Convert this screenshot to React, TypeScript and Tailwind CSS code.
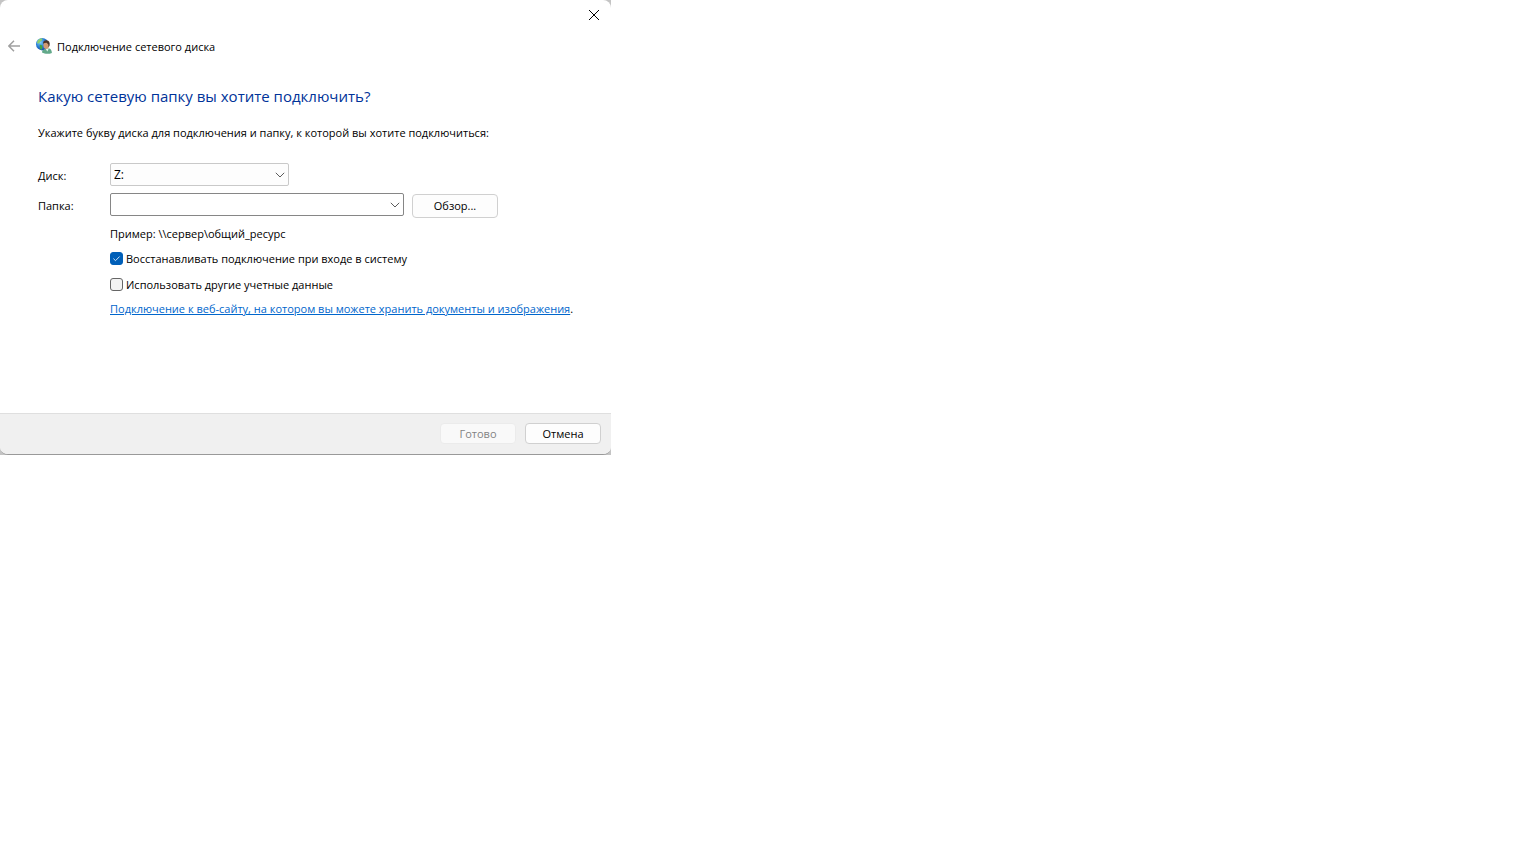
import { useState } from "react";

function GlobeUserIcon() {
  return (
    <svg width="16" height="16" viewBox="0 0 16 16" aria-hidden="true">
      <defs>
        <radialGradient id="globe" cx="0.35" cy="0.35" r="0.75">
          <stop offset="0" stopColor="#7fd0f5" />
          <stop offset="0.5" stopColor="#2a7fd8" />
          <stop offset="1" stopColor="#123f9c" />
        </radialGradient>
      </defs>
      <circle cx="6.2" cy="6.2" r="6.2" fill="url(#globe)" />
      <path d="M2.4 1.8C3.6.7 5.4.3 6.6.6L5.8 2.4 4.4 3.6 3 5.6 1 5.2C1.2 3.8 1.6 2.6 2.4 1.8Z" fill="#8fd06a" />
      <path d="M3.6 6.6 6.4 7.4 6.4 9.6 5.6 12 4 10.4Z" fill="#3fa544" />
      <path d="M6 14.6C6 12.6 7 11.3 9.4 10.9L12.6 10.3C14.8 10.9 15.8 12.4 15.9 15 13 16.2 9 16.2 6 14.6Z" fill="#62a98a" />
      <path d="M9.4 10.4 11.4 13.4 12.8 10.2Z" fill="#e6f3ee" />
      <ellipse cx="10.2" cy="7.2" rx="2.8" ry="3.8" fill="#d19a72" />
      <path d="M7 5.8C7 3.2 8.4 2.1 10.6 2.2 13 2.4 14.2 4.4 13.6 7.4L12.6 9.6 12.4 6.4 10.6 4.8 8.6 5Z" fill="#4a3428" />
    </svg>
  );
}

function Chevron() {
  return (
    <svg width="10" height="6" viewBox="0 0 10 6" fill="none" stroke="#5c5c5c" aria-hidden="true">
      <path d="M0.8 0.8 5 5 9.2 0.8" />
    </svg>
  );
}

interface CheckProps {
  id: string;
  label: string;
  checked: boolean;
  onChange: (value: boolean) => void;
}

function Check({ id, label, checked, onChange }: CheckProps) {
  return (
    <div className="flex items-start gap-[3px]">
      <span className="mt-px grid size-[13px]">
        <input
          id={id}
          type="checkbox"
          checked={checked}
          onChange={(e) => onChange(e.target.checked)}
          className="col-start-1 row-start-1 size-[13px] appearance-none rounded-[3px] border border-[#666666] bg-[#f3f3f3] checked:border-[#005fb8] checked:bg-[#005fb8]"
        />
        {checked && (
          <svg
            viewBox="0 0 13 13"
            fill="none"
            stroke="#cfe3f6"
            className="pointer-events-none col-start-1 row-start-1 size-[13px]"
            aria-hidden="true"
          >
            <path d="M3.4 6.6 5.5 8.7 9.6 4.5" />
          </svg>
        )}
      </span>
      <label htmlFor={id}>{label}</label>
    </div>
  );
}

export default function App() {
  const [drive, setDrive] = useState("Z:");
  const [folder, setFolder] = useState("");
  const [reconnect, setReconnect] = useState(true);
  const [otherCredentials, setOtherCredentials] = useState(false);

  return (
    <div className="min-h-screen bg-white font-['Open_Sans','Noto_Sans',sans-serif] text-[11px] leading-4 text-black">
      <div className="max-w-[611px] bg-[#c4c4c4]">
        <main className="overflow-hidden rounded-lg border-b border-[#999999] bg-white">
          <div className="flex h-[30px] justify-end">
            <button aria-label="Закрыть" className="flex w-[34px] items-center justify-center">
              <svg width="10" height="10" viewBox="0 0 10 10" stroke="#000000" aria-hidden="true">
                <path d="M0 0 10 10M10 0 0 10" />
              </svg>
            </button>
          </div>

          <header className="flex h-8 items-center pl-2">
            <button aria-label="Назад" disabled className="mr-4">
              <svg width="12" height="12" viewBox="0 0 12 12" fill="none" stroke="#a0a0a0" strokeWidth="1.5" aria-hidden="true">
                <path d="M12 6H0.8M6 0.8 0.8 6 6 11.2" />
              </svg>
            </button>
            <GlobeUserIcon />
            <span className="ml-[5px] pt-px">Подключение сетевого диска</span>
          </header>

          <section className="px-[38px] pt-[23px]">
            <h1 className="text-[15px] leading-[22px] text-[#003399]">
              Какую сетевую папку вы хотите подключить?
            </h1>
            <p className="mt-[18px]">
              Укажите букву диска для подключения и папку, к которой вы хотите подключиться:
            </p>
          </section>

          <section className="grid grid-cols-[72px_1fr] pt-[22px] pr-[22px] pl-[38px]">
            <label htmlFor="drive" className="pt-[5px]">Диск:</label>
            <div className="relative h-[23px] w-[179px]">
              <select
                id="drive"
                value={drive}
                onChange={(e) => setDrive(e.target.value)}
                className="h-full w-full appearance-none rounded-xs border border-[#c9c9c9] bg-[#fdfdfd] px-[3px] text-[12px]"
              >
                <option>Z:</option>
                <option>Y:</option>
                <option>X:</option>
              </select>
              <span className="pointer-events-none absolute inset-y-0 right-1 flex items-center">
                <Chevron />
              </span>
            </div>

            <label htmlFor="folder" className="pt-3">Папка:</label>
            <div className="flex gap-2 pt-[7px]">
              <div className="flex h-[23px] w-[294px] rounded-xs border border-[#868686] bg-white">
                <input
                  id="folder"
                  value={folder}
                  onChange={(e) => setFolder(e.target.value)}
                  className="min-w-0 flex-1 px-[3px] text-[12px] outline-none"
                />
                <button aria-label="Показать список папок" className="flex items-center px-[3px]">
                  <Chevron />
                </button>
              </div>
              <button className="mt-px h-6 w-[86px] rounded-sm border border-[#d0d0d0] bg-[#fdfdfd]">
                Обзор...
              </button>
            </div>

            <div className="col-start-2 pt-2">
              <p>Пример: \\сервер\общий_ресурс</p>
              <div className="mt-[9px] flex flex-col gap-[10px]">
                <Check
                  id="reconnect"
                  label="Восстанавливать подключение при входе в систему"
                  checked={reconnect}
                  onChange={setReconnect}
                />
                <Check
                  id="credentials"
                  label="Использовать другие учетные данные"
                  checked={otherCredentials}
                  onChange={setOtherCredentials}
                />
              </div>
              <p className="mt-2">
                <a href="#" className="text-[#0066cc] underline">
                  Подключение к веб-сайту, на котором вы можете хранить документы и изображения
                </a>
                .
              </p>
            </div>
          </section>

          <footer className="mt-24 flex justify-end gap-[9px] border-t border-[#dfdfdf] bg-[#f0f0f0] pt-[9px] pr-[10px] pb-[10px]">
            <button disabled className="h-[21px] w-[76px] rounded-sm border border-[#ebebeb] bg-[#f9f9f9] text-[#838383]">
              Готово
            </button>
            <button className="h-[21px] w-[76px] rounded-sm border border-[#d0d0d0] bg-[#fdfdfd]">
              Отмена
            </button>
          </footer>
        </main>
      </div>
    </div>
  );
}
